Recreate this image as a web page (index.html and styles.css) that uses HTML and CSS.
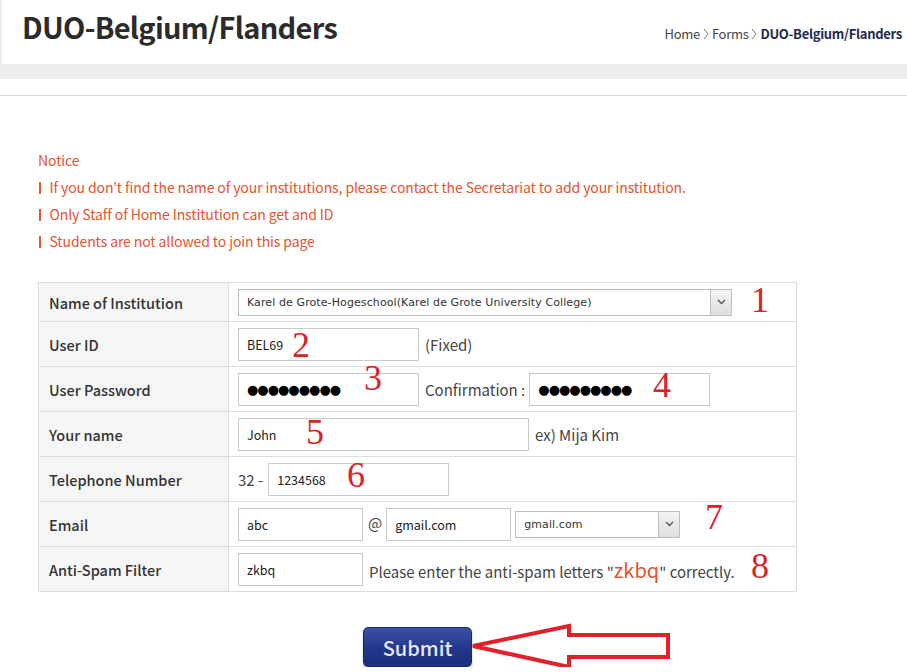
FILE: index.html
```html
<!DOCTYPE html>
<html>
<head>
<meta charset="utf-8">
<title>DUO-Belgium/Flanders</title>
<link rel="stylesheet" href="styles.css">
</head>
<body>
<div class="header">
  <h1 class="title">DUO-Belgium/Flanders</h1>
  <div class="crumbs">
    <span>Home</span>
    <svg class="chev" width="6" height="12" viewBox="0 0 6 12"><path d="M1 1 L5 6 L1 11" fill="none" stroke="#777" stroke-width="1"/></svg>
    <span>Forms</span>
    <svg class="chev" width="6" height="12" viewBox="0 0 6 12"><path d="M1 1 L5 6 L1 11" fill="none" stroke="#777" stroke-width="1"/></svg>
    <strong>DUO-Belgium/Flanders</strong>
  </div>
</div>
<div class="band"></div>
<div class="rule"></div>

<div class="content">
  <div class="notice">
    <p>Notice</p>
    <p><span class="bar"></span>If you don’t find the name of your institutions, please contact the Secretariat to add your institution.</p>
    <p><span class="bar"></span>Only Staff of Home Institution can get and ID</p>
    <p><span class="bar"></span>Students are not allowed to join this page</p>
  </div>

  <div class="formwrap">
    <table class="form">
      <tr class="first">
        <th>Name of Institution</th>
        <td>
          <div class="select wide"><span class="sv">Karel de Grote-Hogeschool(Karel de Grote University College)</span><span class="arrow"><svg width="9" height="6" viewBox="0 0 9 6"><path d="M1 1 L4.5 4.5 L8 1" fill="none" stroke="#555" stroke-width="1.3"/></svg></span></div>
        </td>
      </tr>
      <tr>
        <th>User ID</th>
        <td><div class="line"><div class="field w180">BEL69</div><span class="txt">(Fixed)</span></div></td>
      </tr>
      <tr>
        <th>User Password</th>
        <td><div class="line"><div class="field w180 pw">●●●●●●●●●</div><span class="txt conf">Confirmation :</span><div class="field w180 pw">●●●●●●●●●</div></div></td>
      </tr>
      <tr>
        <th>Your name</th>
        <td><div class="line"><div class="field w290">John</div><span class="txt">ex) Mija Kim</span></div></td>
      </tr>
      <tr>
        <th>Telephone Number</th>
        <td><div class="line"><span class="txt pre">32 -</span><div class="field w180">1234568</div></div></td>
      </tr>
      <tr>
        <th>Email</th>
        <td><div class="line"><div class="field w125">abc</div><span class="txt at">@</span><div class="field w125">gmail.com</div><div class="select small"><span class="sv">gmail.com</span><span class="arrow"><svg width="9" height="6" viewBox="0 0 9 6"><path d="M1 1 L4.5 4.5 L8 1" fill="none" stroke="#555" stroke-width="1.3"/></svg></span></div></div></td>
      </tr>
      <tr>
        <th>Anti-Spam Filter</th>
        <td><div class="line"><div class="field w125">zkbq</div><span class="txt">Please enter the anti-spam letters "<em class="code">zkbq</em>" correctly.</span></div></td>
      </tr>
    </table>
    <span class="num n1">1</span>
    <span class="num n2">2</span>
    <span class="num n3">3</span>
    <span class="num n4">4</span>
    <span class="num n5">5</span>
    <span class="num n6">6</span>
    <span class="num n7">7</span>
    <span class="num n8">8</span>
  </div>

  <div class="actions">
    <button class="submit" type="button">Submit</button>
    <svg class="pointer" width="204" height="50" viewBox="0 0 204 50"><polygon points="3,23 99,3 99,12 198,12 198,34 99,34 99,44" fill="none" stroke="#e3202a" stroke-width="4" stroke-linejoin="miter"/></svg>
  </div>
</div>
</body>
</html>
```

FILE: styles.css
```css
* { box-sizing: border-box; }
html, body { margin: 0; padding: 0; background: #fff; }
body {
  font-family: "Noto Sans CJK KR", "Noto Sans", sans-serif;
  color: #444;
  width: 907px;
  overflow: hidden;
}
.header {
  height: 64px;
  border-left: 2px solid #ececec;
  display: flex;
  align-items: flex-start;
  justify-content: space-between;
  padding: 0 5px 0 20px;
}
.title {
  margin: 6px 0 0 0;
  font-size: 29px;
  font-weight: 700;
  color: #2b2b2b;
  letter-spacing: -0.7px;
  line-height: 40px;
}
.crumbs {
  margin-top: 25px;
  font-size: 13px;
  color: #444;
  display: flex;
  align-items: center;
  gap: 3px;
  letter-spacing: -0.3px;
  line-height: 18px;
}
.crumbs strong { color: #1d2b4f; font-weight: 700; }
.chev { display: block; }
.band { height: 15px; background: #ececec; }
.rule { height: 17px; border-bottom: 1px solid #d9d9d9; }

.content { padding: 0 0 0 38px; }
.notice { margin-top: 51px; color: #e5532f; font-size: 14px; letter-spacing: -0.1px; }
.notice p { margin: 0; height: 27px; line-height: 27px; display: flex; align-items: center; }
.bar { display: inline-block; width: 1.5px; height: 12px; background: #e5532f; margin: 0 9px 0 1px; }

.formwrap { position: relative; margin-top: 27px; width: 759px; }
.form {
  width: 759px;
  border-collapse: collapse;
  border: 1px solid #dcdcdc;
}
.form th, .form td { border-bottom: 1px solid #dcdcdc; padding: 0; }
.form th {
  width: 190px;
  height: 45px;
  background: #f6f6f6;
  border-right: 1px solid #dcdcdc;
  text-align: left;
  font-weight: 500;
  font-size: 14.5px;
  color: #333;
  padding-left: 10px;
}
.form tr.first th, .form tr.first td { height: 39px; }
.form td { padding-left: 9px; font-size: 15px; color: #444; }
.line { display: flex; align-items: center; }
.field {
  height: 33px;
  border: 1px solid #c9c9c9;
  background: #fff;
  font-family: "Noto Sans CJK KR", "Noto Sans", sans-serif;
  font-size: 12.5px;
  color: #222;
  line-height: 31px;
  padding-left: 8px;
}
.w180 { width: 181px; }
.w290 { width: 291px; }
.w125 { width: 125px; }
.pw { font-family: "DejaVu Sans", sans-serif; font-size: 13px; letter-spacing: -1px; color: #000; }
.txt { margin-left: 6px; white-space: nowrap; }
.txt.conf { margin-right: 4px; }
.txt.pre { margin-left: 0; margin-right: 5px; }
.txt.at { margin: 0 4px 0 5px; position: relative; top: -2px; }
.code { font-style: normal; color: #e5532f; font-size: 20px; }

.select {
  display: flex;
  align-items: stretch;
  height: 27px;
  border: 1px solid #bdbdbd;
  background: #fff;
  font-family: "DejaVu Sans", sans-serif;
  font-size: 11px;
  color: #333;
}
.select.wide { width: 494px; }
.select.small { width: 165px; margin-left: 4px; }
.select .sv { flex: 1; line-height: 25px; padding-left: 8px; white-space: nowrap; overflow: hidden; letter-spacing: 0.1px; }
.select .arrow {
  width: 21px;
  border-left: 1px solid #bdbdbd;
  background: linear-gradient(#f4f4f4, #dedede);
  display: flex;
  align-items: center;
  justify-content: center;
}

.num {
  position: absolute;
  font-family: "Liberation Serif", serif;
  font-size: 36px;
  line-height: 1;
  color: #d8232c;
}
.n1 { left: 713px; top: 0px; }
.n2 { left: 254px; top: 45px; }
.n3 { left: 326px; top: 78px; }
.n4 { left: 615px; top: 85px; }
.n5 { left: 268px; top: 132px; }
.n6 { left: 309px; top: 175px; }
.n7 { left: 667px; top: 217px; }
.n8 { left: 713px; top: 266px; }

.actions { position: relative; width: 759px; margin-top: 35px; display: flex; justify-content: center; }
.submit {
  width: 109px;
  height: 40px;
  border: 1px solid #1b2a66;
  border-radius: 5px;
  background: linear-gradient(#3a51a3, #22378a 55%, #1c2f7c);
  color: #e6e9f5;
  font-family: "Noto Sans CJK KR", "Noto Sans", sans-serif;
  font-size: 20px;
  font-weight: 500;
  box-shadow: 0 2px 2px rgba(0,0,0,0.3);
  padding: 0;
}
.pointer { position: absolute; left: 432px; top: -4px; }
```
